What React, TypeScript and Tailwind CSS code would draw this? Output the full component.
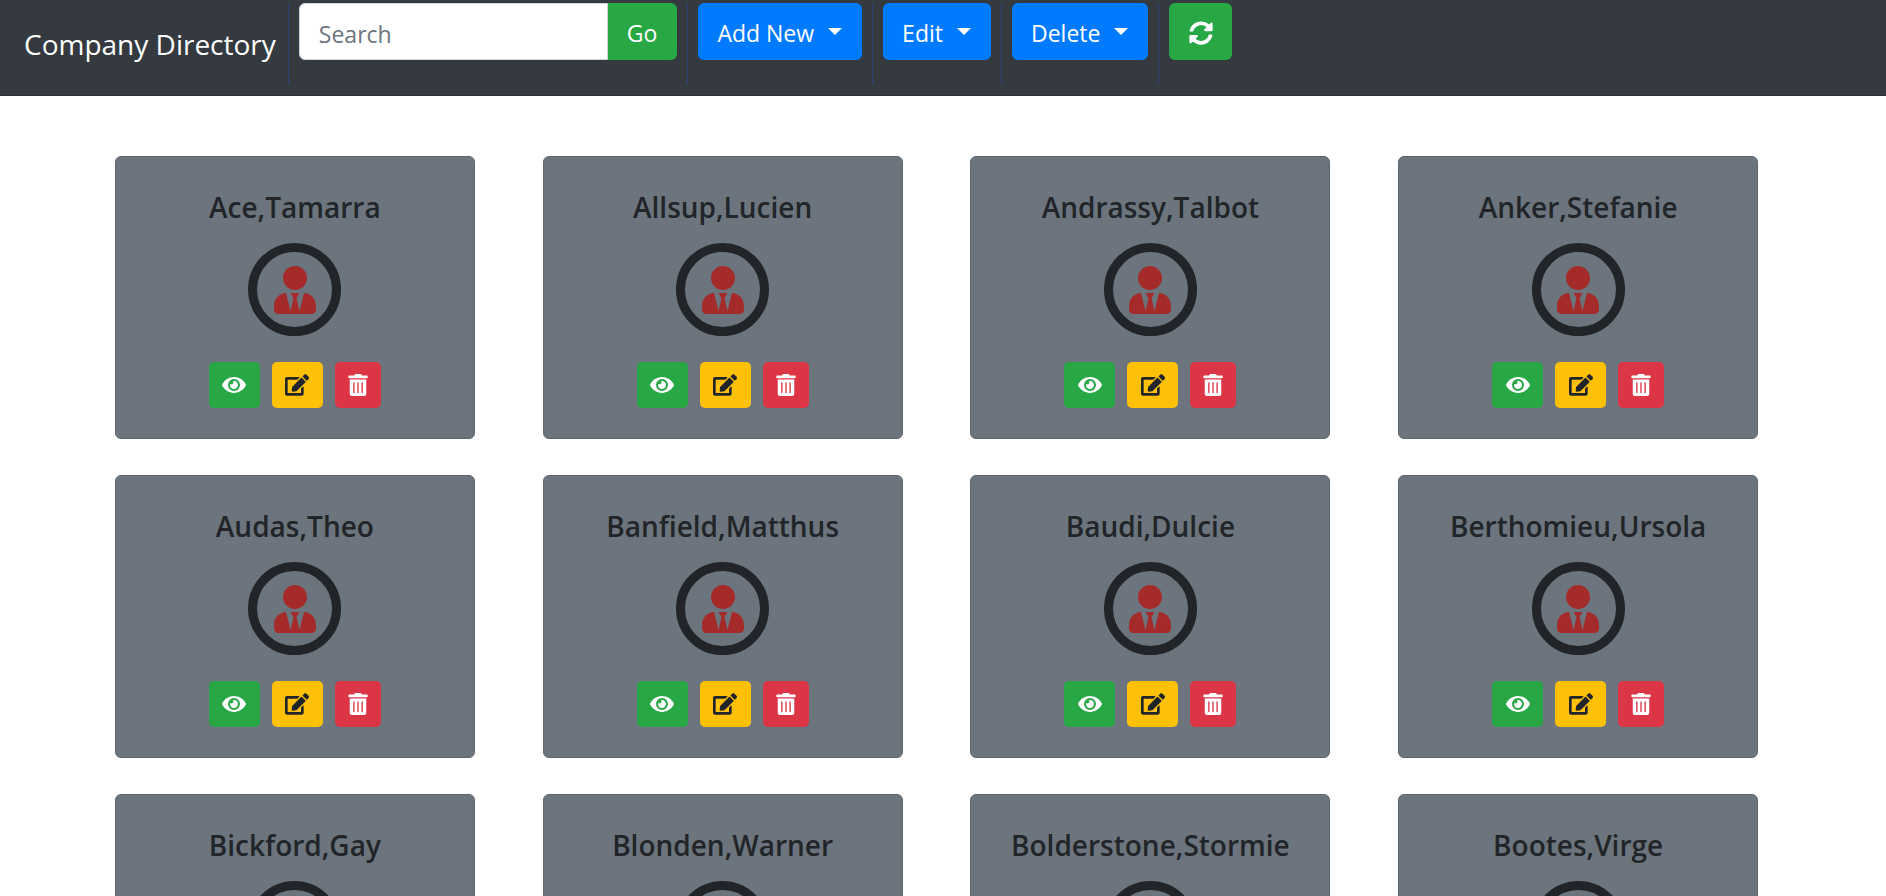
import { useState } from "react";
import { FaEdit, FaEye, FaSyncAlt, FaTrashAlt, FaUserTie } from "react-icons/fa";

type Person = {
  id: number;
  firstName: string;
  lastName: string;
};

const people: Person[] = [
  { id: 1, lastName: "Ace", firstName: "Tamarra" },
  { id: 2, lastName: "Allsup", firstName: "Lucien" },
  { id: 3, lastName: "Andrassy", firstName: "Talbot" },
  { id: 4, lastName: "Anker", firstName: "Stefanie" },
  { id: 5, lastName: "Audas", firstName: "Theo" },
  { id: 6, lastName: "Banfield", firstName: "Matthus" },
  { id: 7, lastName: "Baudi", firstName: "Dulcie" },
  { id: 8, lastName: "Berthomieu", firstName: "Ursola" },
  { id: 9, lastName: "Bickford", firstName: "Gay" },
  { id: 10, lastName: "Blonden", firstName: "Warner" },
  { id: 11, lastName: "Bolderstone", firstName: "Stormie" },
  { id: 12, lastName: "Bootes", firstName: "Virge" },
];

function Divider() {
  return <div className="mx-[10px] w-px self-stretch bg-[#2c4478]" />;
}

function MenuButton({ label }: { label: string }) {
  return (
    <button
      type="button"
      aria-haspopup="menu"
      className="flex h-[57px] items-center rounded-md bg-[#007bff] pt-1 pr-5 pl-[19px] text-white hover:bg-[#0069d9]"
    >
      {label}
      <span className="mb-1 ml-3.5 border-x-7 border-t-7 border-x-transparent border-t-white" />
    </button>
  );
}

function PersonCard({ person }: { person: Person }) {
  const name = `${person.lastName},${person.firstName}`;
  return (
    <article className="mx-auto flex w-[360px] max-w-full flex-col items-center rounded-md border border-[#5e666f] bg-[#6c757d] px-4 pt-8 pb-[30px]">
      <h2 className="text-[28px] leading-9 font-semibold">{name}</h2>
      <div className="mt-[18px] flex size-[93px] items-center justify-center rounded-full border-9 border-[#212529]">
        <FaUserTie className="size-12 text-[#a52a2a]" />
      </div>
      <div className="mt-[26px] flex gap-3">
        <button
          type="button"
          aria-label={`View ${name}`}
          className="flex h-[46px] w-[51px] items-center justify-center rounded-[5px] bg-[#28a745] text-white"
        >
          <FaEye className="size-6" />
        </button>
        <button
          type="button"
          aria-label={`Edit ${name}`}
          className="flex h-[46px] w-[51px] items-center justify-center rounded-[5px] bg-[#ffc107]"
        >
          <FaEdit className="size-6" />
        </button>
        <button
          type="button"
          aria-label={`Delete ${name}`}
          className="flex h-[46px] w-[46px] items-center justify-center rounded-[5px] bg-[#dc3545] text-white"
        >
          <FaTrashAlt className="size-[22px]" />
        </button>
      </div>
    </article>
  );
}

export default function App() {
  const [search, setSearch] = useState("");

  return (
    <div className="min-h-screen bg-white font-['Open_Sans','Noto_Sans',sans-serif] text-[#212529]">
      <header className="border-b border-[#2b2f33] bg-[#343a40] pt-[3px] pb-[11px] pl-6">
        <nav className="flex h-[81px] items-start text-[23px]">
          <a href="#" className="pt-5 pr-0.5 text-[28px] leading-[42px] whitespace-nowrap text-white">
            Company Directory
          </a>
          <Divider />
          <form className="flex" onSubmit={(e) => e.preventDefault()}>
            <input
              type="text"
              aria-label="Search"
              placeholder="Search"
              value={search}
              onChange={(e) => setSearch(e.target.value)}
              className="h-[57px] w-[309px] rounded-l-md border border-[#ced4da] bg-white px-[19px] pt-1 placeholder:text-[#6c757d]"
            />
            <button type="submit" className="h-[57px] rounded-r-md bg-[#28a745] pt-1 pr-5 pl-[19px] text-white">
              Go
            </button>
          </form>
          <Divider />
          <MenuButton label="Add New" />
          <Divider />
          <MenuButton label="Edit" />
          <Divider />
          <MenuButton label="Delete" />
          <Divider />
          <button
            type="button"
            aria-label="Refresh"
            className="flex h-[57px] w-[63px] items-center justify-center rounded-md bg-[#28a745] pt-0.5 text-white"
          >
            <FaSyncAlt className="size-6" />
          </button>
        </nav>
      </header>

      <main className="grid grid-cols-4 gap-y-9 pt-[60px] pr-[94px] pb-9 pl-[81px]">
        {people.map((p) => (
          <PersonCard key={p.id} person={p} />
        ))}
      </main>
    </div>
  );
}
